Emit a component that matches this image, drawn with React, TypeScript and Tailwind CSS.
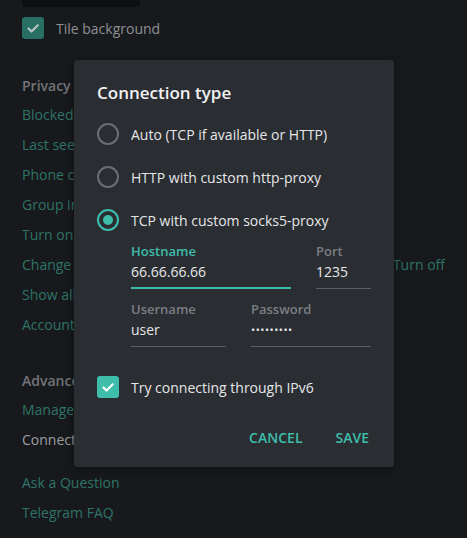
import React from "react";

const Check = ({ className }: { className?: string }) => (
  <svg viewBox="0 0 22 22" className={className} fill="none">
    <path d="M6.5 11.5l3 3L15.8 8.3" stroke="currentColor" strokeWidth="2.2" strokeLinecap="round" strokeLinejoin="round" />
  </svg>
);

const Radio = ({ checked, label }: { checked?: boolean; label: string }) => (
  <div className="flex items-center h-[22px]">
    {checked ? (
      <div className="w-[22px] h-[22px] rounded-full border-2 border-[#3ebdab] flex items-center justify-center">
        <div className="w-[10px] h-[10px] rounded-full bg-[#3ebdab]" />
      </div>
    ) : (
      <div className="w-[22px] h-[22px] rounded-full border-2 border-[#6b6e73]" />
    )}
    <span className="ml-[12px] text-[14px] text-[#e6e7e9]">{label}</span>
  </div>
);

const Field = ({
  label,
  value,
  width,
  active,
  secret,
}: {
  label: string;
  value: string;
  width: string;
  active?: boolean;
  secret?: boolean;
}) => (
  <div className={`flex flex-col ${width}`}>
    <span className={`text-[13px] leading-[16px] font-semibold ${active ? "text-[#3ebdab]" : "text-[#7b7e83]"}`}>{label}</span>
    <span
      className={`${secret ? "text-[11px] tracking-[0.5px]" : "text-[14px]"} leading-[20px] mt-[3px] text-[#e6e7e9] h-[20px]`}
    >
      {value}
    </span>
    <div className={`${active ? "mt-[5px] h-[2px] bg-[#3ebdab]" : "h-px bg-[#5c5f64] mt-[6px]"}`} />
  </div>
);

export default function App() {
  const link = "text-[#2f7468]";
  return (
    <div
      className="relative w-[467px] h-[538px] overflow-hidden bg-[#17191c]"
      style={{ fontFamily: '"Open Sans", sans-serif' }}
    >
      <div className="px-[22px]">
        <div className="w-[118px] h-[7px] bg-[#0e0f11] rounded-b-[3px]" />
        <div className="flex items-center mt-[10px] h-[22px]">
          <div className="w-[22px] h-[22px] rounded-[3px] bg-[#286f63] flex items-center justify-center text-[#b9c4c2]">
            <Check className="w-[22px] h-[22px]" />
          </div>
          <span className="ml-[12px] text-[14px] text-[#8d9094]">Tile background</span>
        </div>

        <div className="mt-[32px] text-[14px] leading-[30px]">
          <div className="font-semibold text-[#727478] h-[29px]">Privacy and Security</div>
          <div className={link}>Blocked users</div>
          <div className={link}>Last seen &amp; online</div>
          <div className={link}>Phone calls</div>
          <div className={link}>Group invite settings</div>
          <div className={link}>Turn on local passcode</div>
          <div className="flex justify-between">
            <span className={link}>Change cloud password</span>
            <span className={link}>Turn off</span>
          </div>
          <div className={link}>Show all sessions</div>
          <div className={link}>Account self-destruct</div>

          <div className="font-semibold text-[#727478] mt-[26px] h-[29px]">Advanced</div>
          <div className={link}>Manage local storage</div>
          <div className="text-[#9c9ea1]">Connection type</div>
          <div className={`${link} mt-[13px]`}>Ask a Question</div>
          <div className={link}>Telegram FAQ</div>
        </div>
      </div>

      <div className="absolute left-[74px] top-[60px] w-[320px] h-[407px] bg-[#2a2d32] rounded-[3px] shadow-[0_2px_10px_rgba(0,0,0,0.4)] px-[23px] pt-[22px]">
        <div className="text-[17px] font-semibold text-[#f1f2f3] leading-[22px]">Connection type</div>
        <div className="mt-[19px] flex flex-col gap-[21px]">
          <Radio label="Auto (TCP if available or HTTP)" />
          <Radio label="HTTP with custom http-proxy" />
          <Radio checked label="TCP with custom socks5-proxy" />
        </div>
        <div className="ml-[34px] mt-[12px] flex flex-col gap-[12px]">
          <div className="flex gap-[25px]">
            <Field label="Hostname" value="66.66.66.66" width="w-[160px]" active />
            <Field label="Port" value="1235" width="w-[55px]" />
          </div>
          <div className="flex gap-[25px]">
            <Field label="Username" value="user" width="w-[95px]" />
            <Field label="Password" value="•••••••••" width="w-[120px]" secret />
          </div>
        </div>
        <div className="flex items-center mt-[29px] h-[22px]">
          <div className="w-[22px] h-[22px] rounded-[3px] bg-[#3ebdab] flex items-center justify-center text-white">
            <Check className="w-[22px] h-[22px]" />
          </div>
          <span className="ml-[12px] text-[14px] text-[#e6e7e9]">Try connecting through IPv6</span>
        </div>
        <div className="flex justify-end gap-[33px] mt-[29px] pr-[2px] text-[14px] font-semibold text-[#3ebdab]">
          <span>CANCEL</span>
          <span>SAVE</span>
        </div>
      </div>
    </div>
  );
}
